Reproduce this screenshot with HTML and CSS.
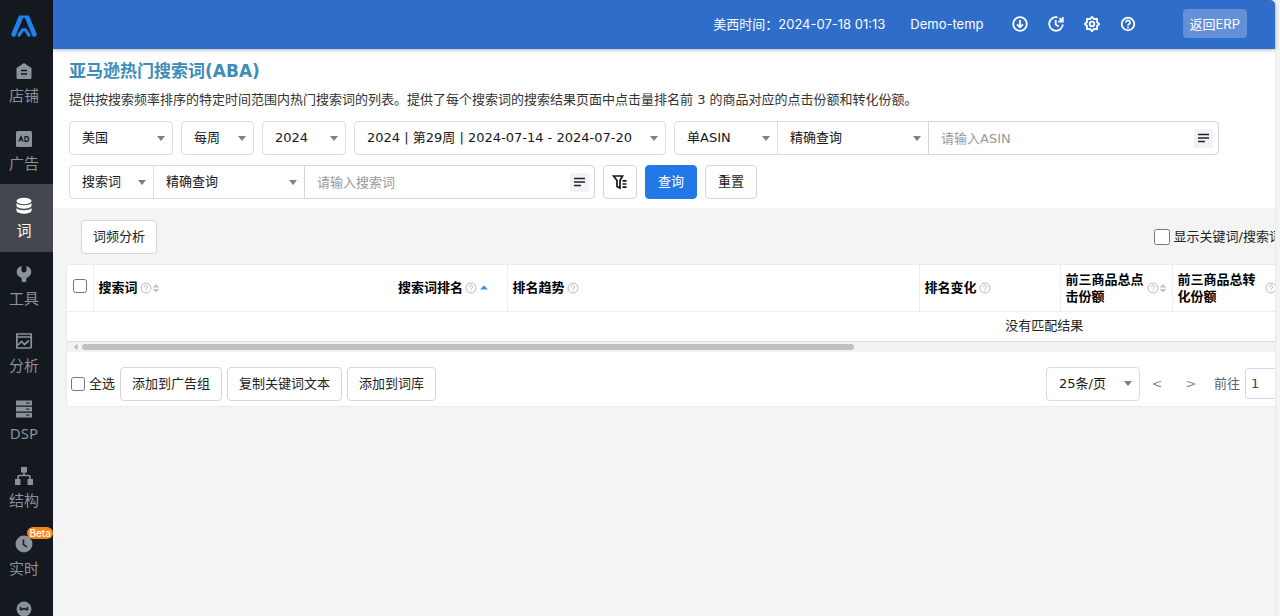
FILE: index.html
```html
<!DOCTYPE html>
<html lang="zh-CN">
<head>
<meta charset="utf-8">
<title>亚马逊热门搜索词(ABA)</title>
<link rel="stylesheet" href="styles.css">
</head>
<body>
<svg class="sprite" aria-hidden="true">
  <symbol id="help" viewBox="0 0 12 12"><circle cx="6" cy="6" r="5" fill="none" stroke="currentColor"/><path d="M4.400 4.900a1.600 1.600 0 1 1 2.500 1.200c-.6.4-.9.6-.9 1.100M6 8.100v1" fill="none" stroke="currentColor"/></symbol>
  <symbol id="sort" viewBox="0 0 8 10"><path d="M4 1l3.500 3.500h-7zM4 9.500l3.500-3.500h-7z" fill="currentColor"/></symbol>
  <symbol id="lines" viewBox="0 0 12 10"><path d="M0 1.500h11M0 5h11M0 8.500h7" fill="none" stroke="currentColor" stroke-width="1.600"/></symbol>
</svg>
<div class="app">
  <nav class="sidebar">
    <a class="logo" href="#" aria-label="首页">
      <svg width="26" height="22" viewBox="0 0 26 22" fill="none" stroke-linecap="round" stroke-linejoin="round"><path d="M2.600 19.500L9.500 3M23.400 19.500L16.500 3" stroke="#2380ea" stroke-width="4.600"/><path d="M9.500 1.800h7" stroke="#2380ea" stroke-width="2.400"/><path d="M8 20l3.600-5.500M18 20l-3.600-5.500" stroke="#2380ea" stroke-width="3.400"/><path d="M5.500 20L11.200 12.800h3.600L20.500 20" stroke="#14181f" stroke-width=".6"/></svg>
    </a>
    <a class="item" href="#">
      <svg class="glyph" viewBox="0 0 18 18"><path d="M9 1l7.500 5v9.500a1.500 1.500 0 0 1-1.500 1.500H3a1.500 1.500 0 0 1-1.500-1.500V6z" fill="currentColor"/><path d="M6 8.500h6M6 12h6" stroke="#14181f" stroke-width="1.300"/></svg>
      <span>店铺</span></a>
    <a class="item" href="#">
      <svg class="glyph" viewBox="0 0 18 18"><rect x="1" y="1" width="16" height="16" rx="1.500" fill="currentColor"/><path d="M3.800 11.500L6 6.500l2.200 5M4.600 10h2.800M10 6.700v4.600h1.500c2.800 0 2.800-4.600 0-4.600z" fill="none" stroke="#14181f" stroke-width="1.200"/></svg>
      <span>广告</span></a>
    <a class="item active" href="#" aria-current="page">
      <svg class="glyph" viewBox="0 0 18 18" fill="currentColor"><ellipse cx="9" cy="4" rx="7.500" ry="3.200"/><path d="M1.500 6c2 3 13 3 15 0v3c-1.500 3.600-13.500 3.600-15 0z"/><path d="M1.500 11c2 3 13 3 15 0v3c-1.500 3.600-13.500 3.600-15 0z"/></svg>
      <span>词</span></a>
    <a class="item" href="#">
      <svg class="glyph" viewBox="0 0 18 18"><path d="M6.500 1v5.200L9 7.800l2.500-1.600V1c5.500 1.500 6.500 8 1.800 11l-1.900 1v2.500c0 2.200-4.800 2.200-4.800 0V13l-1.900-1C0 9 1 2.500 6.500 1z" fill="currentColor"/></svg>
      <span>工具</span></a>
    <a class="item" href="#">
      <svg class="glyph" viewBox="0 0 18 18" fill="none" stroke="currentColor" stroke-width="1.700"><path d="M1 2h15.200v14M1 5h15M1.900 2v14H16M3 13l3.500-3.500 3 3L14 8.500"/></svg>
      <span>分析</span></a>
    <a class="item" href="#">
      <svg class="glyph" viewBox="0 0 18 18"><path d="M1 .5h16v5H1zM1 6.700h16v4.800H1zM1 12.700h16v4.800H1z" fill="currentColor"/><path d="M11 3h3.500M11 9.100h3.500M11 15.100h3.500" stroke="#14181f" stroke-width="1"/></svg>
      <span>DSP</span></a>
    <a class="item" href="#">
      <svg class="glyph" viewBox="0 0 18 18"><path d="M6 0h6v5.500H6zM0 12h5.500v6H0zM12.500 12H18v6h-5.500z" fill="currentColor"/><path d="M9 5v3.500M3 12V10c0-1 .5-1.500 1.500-1.500h9c1 0 1.500.5 1.500 1.500v2" fill="none" stroke="currentColor" stroke-width="1.700"/></svg>
      <span>结构</span></a>
    <a class="item" href="#">
      <b class="beta">Beta</b>
      <svg class="glyph" viewBox="0 0 18 18"><circle cx="9" cy="9" r="8.500" fill="currentColor"/><path d="M8.500 4.500v5l3.500 2.500" fill="none" stroke="#14181f" stroke-width="1.500"/></svg>
      <span>实时</span></a>
    <a class="item last" href="#" aria-label="助手">
      <svg class="glyph" viewBox="0 0 18 18"><circle cx="9" cy="9" r="7.500" fill="currentColor"/><path d="M5.500 7v3M12.500 7v3M5.500 10l3.500-1.500 3.500 1.500" fill="none" stroke="#14181f" stroke-width="1.500"/></svg>
    </a>
  </nav>

  <div class="page">
    <header class="topbar">
      <span class="clock">美西时间：2024-07-18 01:13</span>
      <a class="account" href="#">Demo-temp</a>
      <div class="tools">
        <button class="tool" aria-label="下载"><svg viewBox="0 0 16 16"><circle cx="8" cy="8" r="6.800"/><path d="M8 4v7M5 8.300l3 3 3-3"/></svg></button>
        <button class="tool" aria-label="历史"><svg viewBox="0 0 16 16"><path d="M9.500 1.300A6.800 6.800 0 1 0 14.800 8.500M14.800 1v4.500h-4.500M14.500 5.200L11.500 2.200M7.700 4v4.500l3 2"/></svg></button>
        <button class="tool" aria-label="设置"><svg viewBox="0 0 16 16"><path d="M8 .8L10 3l3.100-.1L13 6l2.200 2-2.200 2 .1 3.100L10 13l-2 2.200L6 13l-3.100.1L3 10 .8 8 3 6l-.1-3.100L6 3z"/><circle cx="8" cy="8" r="2.300"/></svg></button>
        <button class="tool" aria-label="帮助"><svg viewBox="0 0 16 16"><circle cx="8" cy="8" r="6.300"/><path d="M6 6.500a2 2 0 1 1 3.300 1.400C8.500 8.500 8 8.700 8 9.700M8 10.800v1.400"/></svg></button>
      </div>
      <button class="back">返回ERP</button>
    </header>

    <main class="main">
      <section class="filters">
        <h1>亚马逊热门搜索词(ABA)</h1>
        <p>提供按搜索频率排序的特定时间范围内热门搜索词的列表。提供了每个搜索词的搜索结果页面中点击量排名前 3 的商品对应的点击份额和转化份额。</p>
        <form class="fields">
          <div class="select w-country"><select aria-label="国家"><option>美国</option></select></div>
          <div class="select w-cycle"><select aria-label="周期"><option>每周</option></select></div>
          <div class="select w-year"><select aria-label="年份"><option>2024</option></select></div>
          <div class="select w-week"><select aria-label="周"><option>2024 | 第29周 | 2024-07-14 - 2024-07-20</option></select></div>
          <div class="group">
            <div class="select w-country"><select aria-label="ASIN类型"><option>单ASIN</option></select></div>
            <div class="select w-match"><select aria-label="ASIN匹配方式"><option>精确查询</option></select></div>
            <div class="entry"><input type="text" placeholder="请输入ASIN" aria-label="ASIN"><button type="button" class="multi" aria-label="批量输入ASIN"><svg width="12" height="10"><use href="#lines"/></svg></button></div>
          </div>
          <div class="group">
            <div class="select w-term"><select aria-label="搜索类型"><option>搜索词</option></select></div>
            <div class="select w-match"><select aria-label="搜索词匹配方式"><option>精确查询</option></select></div>
            <div class="entry"><input type="text" placeholder="请输入搜索词" aria-label="搜索词"><button type="button" class="multi" aria-label="批量输入搜索词"><svg width="12" height="10"><use href="#lines"/></svg></button></div>
          </div>
          <button type="button" class="btn square" aria-label="高级筛选"><svg width="16" height="16" viewBox="0 0 16 16" fill="none" stroke="#15171c" stroke-width="1.700"><path d="M1.500 2h9L8 6.500V14l-3-1.500v-6zM10.500 6.800H14.500M10.500 10H14.500M10.500 13.200H14.500"/></svg></button>
          <button type="button" class="btn primary">查询</button>
          <button type="button" class="btn">重置</button>
        </form>
      </section>

      <section class="results">
        <div class="toolbar">
          <button class="btn">词频分析</button>
          <label class="check large"><input type="checkbox">显示关键词/搜索词</label>
        </div>
        <div class="sheet">
          <table>
            <colgroup><col class="c-check"><col class="c-word"><col class="c-rank"><col class="c-trend"><col class="c-change"><col class="c-share"><col class="c-conv"><col></colgroup>
            <thead>
              <tr>
                <th class="pick"><input type="checkbox" aria-label="选择全部行"></th>
                <th class="plain"><div class="head">搜索词<svg class="q"><use href="#help"/></svg><svg class="s"><use href="#sort"/></svg></div></th>
                <th><div class="head">搜索词排名<svg class="q"><use href="#help"/></svg><svg class="up" viewBox="0 0 8 5"><path d="M0 4.500L4 .5l4 4z" fill="#3a8ee6"/></svg></div></th>
                <th><div class="head">排名趋势<svg class="q"><use href="#help"/></svg></div></th>
                <th><div class="head">排名变化<svg class="q"><use href="#help"/></svg></div></th>
                <th><div class="head"><span>前三商品总点击份额</span><svg class="q"><use href="#help"/></svg><svg class="s"><use href="#sort"/></svg></div></th>
                <th><div class="head"><span>前三商品总转化份额</span><svg class="q"><use href="#help"/></svg><svg class="s"><use href="#sort"/></svg></div></th>
                <th></th>
              </tr>
            </thead>
            <tbody><tr><td colspan="8">没有匹配结果</td></tr></tbody>
          </table>
          <div class="track"><svg width="5" height="8" viewBox="0 0 5 8"><path d="M4.500 1v6L1 4z" fill="#b5b5b5"/></svg><div class="thumb"></div></div>
          <div class="footer">
            <label class="check"><input type="checkbox">全选</label>
            <button class="btn">添加到广告组</button>
            <button class="btn">复制关键词文本</button>
            <button class="btn">添加到词库</button>
            <div class="pager">
              <div class="select w-size"><select aria-label="每页条数"><option>25条/页</option></select></div>
              <button class="step" aria-label="上一页">&lt;</button>
              <button class="step" aria-label="下一页">&gt;</button>
              <label class="goto">前往<input type="text" value="1"></label>
            </div>
          </div>
        </div>
      </section>
    </main>
  </div>
</div>
</body>
</html>
```

FILE: styles.css
```css
* { box-sizing: border-box; }

body {
  margin: 0;
  background: #f4f4f4;
  color: #222;
  font: 13px/20px "DejaVu Sans", "Noto Sans CJK SC", sans-serif;
}

button, input, select { font: inherit; color: inherit; }
button { cursor: pointer; }
a { color: inherit; text-decoration: none; }
.sprite { position: absolute; width: 0; height: 0; }

.app { display: flex; height: 100vh; overflow: hidden; }

/* Sidebar */
.sidebar {
  flex: none;
  display: flex;
  flex-direction: column;
  width: 53px;
  overflow: hidden;
  background: #14181f;
  color: #8b9298;
  font: 15px/22px "Noto Sans", "Noto Sans CJK SC", sans-serif;
}
.logo { display: flex; flex: none; height: 49px; padding: 2px 5px 0 0; align-items: center; justify-content: center; }
.item {
  position: relative;
  display: flex;
  flex: 1 0 67px;
  flex-direction: column;
  align-items: center;
  gap: 4px;
  max-height: 68px;
  padding: 13px 5px 0 0;
}
.item.last { flex: none; height: 27px; padding-top: 11px; }
.item.active { background: #44474d; color: #fff; }
.glyph { flex: none; width: 18px; height: 18px; }
.beta {
  position: absolute;
  top: 5px;
  right: 0;
  padding: 0 2px;
  border-radius: 6px;
  background: #ff8412;
  color: #fff;
  font: 500 10px/12px Inter, sans-serif;
}

/* Top bar */
.page {
  flex: 1;
  min-width: 0;
  display: flex;
  flex-direction: column;
  margin-right: 4px;
  border-right: 1px solid #e9e9e9;
}
.topbar {
  position: relative;
  display: flex;
  align-items: center;
  justify-content: flex-end;
  height: 49px;
  flex: none;
  padding: 0 28px 2px 0;
  border-radius: 0 5px 0 0;
  background: #2f6dcb;
  box-shadow: 0 1px 4px rgba(0, 0, 0, .3);
  color: #fff;
  font: 13px/20px Inter, "Noto Sans CJK SC", sans-serif;
}
.clock { margin-right: 25px; }
.account { margin-right: 28px; }
.tools { display: flex; gap: 20px; margin-right: 47px; }
.tool { display: flex; padding: 0; border: 0; background: none; }
.tool svg { width: 16px; height: 16px; fill: none; stroke: #fff; stroke-width: 1.8; }
.back { height: 29px; padding: 0 7px; border: 0; border-radius: 4px; background: #6490d7; white-space: nowrap; }

/* Filters */
.main { flex: 1; min-height: 0; overflow: hidden; }
.filters { padding: 11px 16px 9px; background: #fff; }
h1 { margin: 0; color: #3c8dbc; font-size: 17px; line-height: 22px; }
p { margin: 8px 0 11px; color: #333; white-space: nowrap; }
.fields { display: flex; flex-wrap: wrap; gap: 10px 8px; }

.select {
  display: grid;
  align-items: center;
  height: 34px;
  border: 1px solid #dcdcdc;
  border-radius: 4px;
  background: #fff;
  color: #15171c;
}
.select select {
  grid-area: 1 / 1;
  width: 100%;
  height: 32px;
  padding: 0 20px 0 12px;
  border: 0;
  background: none;
  appearance: none;
}
.select::after {
  content: "";
  grid-area: 1 / 1;
  justify-self: end;
  margin-right: 7px;
  border: 4px solid transparent;
  border-top: 5px solid #808080;
  border-bottom: 0;
  pointer-events: none;
}
.w-country { width: 104px; }
.w-cycle { width: 73px; }
.w-year { width: 84px; }
.w-week { width: 312px; }
.w-match { width: 152px; }
.w-term { width: 85px; }
.w-size { width: 94px; }

.group { display: flex; }
.group .select { border-radius: 0; margin-right: -1px; }
.group .select:first-child { border-radius: 4px 0 0 4px; }
.entry {
  display: flex;
  align-items: center;
  width: 291px;
  height: 34px;
  padding-right: 5px;
  border: 1px solid #d4d6da;
  border-radius: 0 4px 4px 0;
  background: #fff;
}
.entry input { flex: 1; min-width: 0; height: 32px; padding: 0 12px; border: 0; background: none; }
.entry input::placeholder { color: #999; }
.multi {
  display: flex;
  align-items: center;
  justify-content: center;
  width: 19px;
  height: 19px;
  padding: 0;
  border: 0;
  border-radius: 2px;
  background: #f0f2f6;
}

.btn {
  height: 34px;
  padding: 0 11px;
  border: 1px solid #d4d6da;
  border-radius: 4px;
  background: #fff;
  color: #222;
  white-space: nowrap;
}
.fields .btn { padding: 0 12px; }
.fields .square { display: flex; align-items: center; padding: 0 8px; }
.btn.primary { border-color: #2178e6; background: #2178e6; color: #fff; }

/* Results */
.results { width: calc(100% + 24px); padding: 12px 0 0 13px; }
.toolbar { display: flex; align-items: center; justify-content: space-between; padding: 0 17px 10px 15px; }
.check { display: flex; align-items: center; gap: 4px; white-space: nowrap; }
.check input, .pick input { width: 14px; height: 14px; margin: 0; }
.check.large input { width: 16px; height: 16px; }

.sheet { overflow: hidden; border: 1px solid #ececec; border-radius: 3px; background: #fff; }
table { width: 1955px; table-layout: fixed; border-collapse: collapse; }
.c-check { width: 26px; }
.c-word { width: 300px; }
.c-rank { width: 114px; }
.c-trend { width: 412px; }
.c-change { width: 141px; }
.c-share { width: 112px; }
.c-conv { width: 118px; }
th {
  height: 46px;
  padding: 0 5px;
  border-right: 1px solid #ebeef5;
  border-bottom: 1px solid #ebeef5;
  color: #000;
  font-weight: bold;
  line-height: 17px;
  text-align: left;
}
th.plain { border-right: 0; }
.pick { padding: 0 0 5px; text-align: center; line-height: 14px; }
.pick input { vertical-align: middle; }
.head { display: flex; align-items: center; white-space: nowrap; }
.head span { flex: 1; white-space: normal; }
.q { flex: none; width: 12px; height: 12px; margin-left: 2px; color: #b8bbc0; }
.s { flex: none; width: 8px; height: 10px; color: #c0c4cc; }
.up { flex: none; width: 8px; height: 5px; margin-left: 3px; }
td { height: 30px; padding: 0; border-bottom: 1px solid #dfdfdf; text-align: center; }

.track { display: flex; align-items: center; gap: 4px; height: 10px; padding-left: 6px; background: #f2f2f2; }
.thumb { width: 63%; height: 6px; border-radius: 3px; background: #c1c1c1; }

.footer { display: flex; align-items: center; gap: 5px; height: 54px; padding: 15px 3px 5px 4px; }
.pager { display: flex; align-items: center; margin-left: auto; }
.step { width: 34px; padding: 0; border: 0; background: none; color: #8c8c8c; }
.goto { display: flex; align-items: center; gap: 5px; margin-left: 6px; color: #606266; white-space: nowrap; }
.goto input { width: 50px; height: 31px; padding: 0 5px; border: 1px solid #d4d6da; border-radius: 3px; color: #444; }
```
